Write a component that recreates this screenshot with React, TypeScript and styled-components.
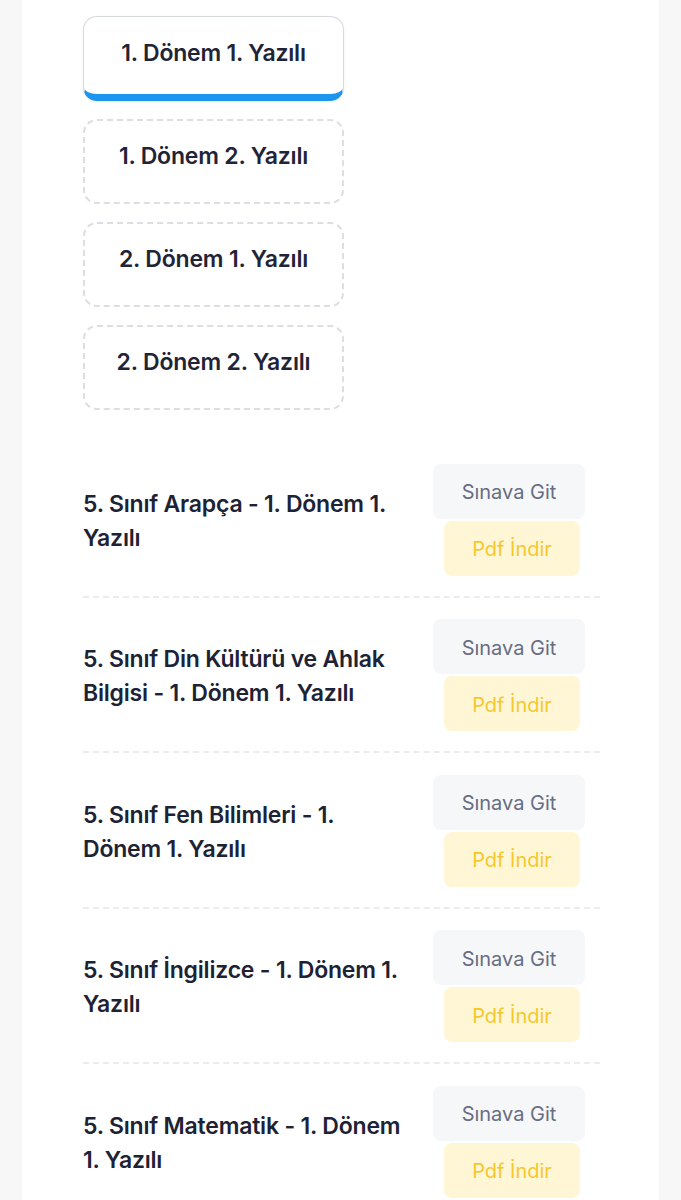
import React, { useState } from "react";
import styled, { createGlobalStyle, css } from "styled-components";

const GlobalStyle = createGlobalStyle`
  body {
    margin: 0;
    background: #f7f7f8;
    font-family: Inter, "Noto Sans", sans-serif;
    -webkit-font-smoothing: antialiased;
  }
`;

const terms = [
  "1. Dönem 1. Yazılı",
  "1. Dönem 2. Yazılı",
  "2. Dönem 1. Yazılı",
  "2. Dönem 2. Yazılı",
];

const exams = [
  "5. Sınıf Arapça - 1. Dönem 1. Yazılı",
  "5. Sınıf Din Kültürü ve Ahlak Bilgisi - 1. Dönem 1. Yazılı",
  "5. Sınıf Fen Bilimleri - 1. Dönem 1. Yazılı",
  "5. Sınıf İngilizce - 1. Dönem 1. Yazılı",
  "5. Sınıf Matematik - 1. Dönem 1. Yazılı",
];

export default function App() {
  const [active, setActive] = useState(0);

  return (
    <>
      <GlobalStyle />
      <Card>
        <TabList>
          {terms.map((t, i) => (
            <Tab key={t} $active={i === active} onClick={() => setActive(i)}>
              {t}
            </Tab>
          ))}
        </TabList>

        <ExamList>
          {exams.map((e) => (
            <ExamRow key={e}>
              <ExamTitle>{e}</ExamTitle>
              <Actions>
                <GoButton>Sınava Git</GoButton>
                <PdfButton>Pdf İndir</PdfButton>
              </Actions>
            </ExamRow>
          ))}
        </ExamList>
      </Card>
    </>
  );
}

const Card = styled.div`
  margin: 0 22px;
  background: #fff;
  padding: 16px 58px 0 61px;
  min-height: 1200px;
  box-sizing: border-box;
`;

const TabList = styled.div`
  display: flex;
  flex-direction: column;
  gap: 18px;
  width: 261px;
`;

const Tab = styled.button<{ $active: boolean }>`
  height: 85px;
  box-sizing: border-box;
  border-radius: 14px;
  background: #fff;
  font-family: inherit;
  font-size: 23px;
  font-weight: 600;
  color: #1f2436;
  letter-spacing: -0.2px;
  padding: 0 0 12px;
  cursor: pointer;
  ${({ $active }) =>
    $active
      ? css`
          border: 1px solid #d6d9df;
          border-bottom: 7px solid #1c95ee;
          padding-bottom: 6px;
          box-shadow: 0 1px 3px rgba(0, 0, 0, 0.06);
        `
      : css`
          border: 2px dashed #dcdee3;
        `}
`;

const ExamList = styled.div`
  margin-top: 32px;
  width: 517px;
`;

const ExamRow = styled.div`
  display: flex;
  align-items: center;
  justify-content: space-between;
  padding: 21.5px 15px 20px 0;
  border-bottom: 2px dashed #ebecef;
`;

const ExamTitle = styled.div`
  width: 322px;
  font-size: 23px;
  font-weight: 600;
  line-height: 34px;
  color: #1d2234;
  letter-spacing: -0.2px;
  padding-top: 2px;
`;

const Actions = styled.div`
  display: flex;
  flex-direction: column;
  align-items: center;
  gap: 2px;
`;

const ActionButton = styled.button`
  border: none;
  border-radius: 8px;
  font-family: inherit;
  font-size: 20px;
  font-weight: 400;
  cursor: pointer;
  height: 55px;
  padding: 2px 0 0;
`;

const GoButton = styled(ActionButton)`
  width: 152px;
  background: #f6f7f9;
  color: #676d82;
`;

const PdfButton = styled(ActionButton)`
  width: 136px;
  margin-left: 6px;
  background: #fff6d6;
  color: #f4c82d;
`;
